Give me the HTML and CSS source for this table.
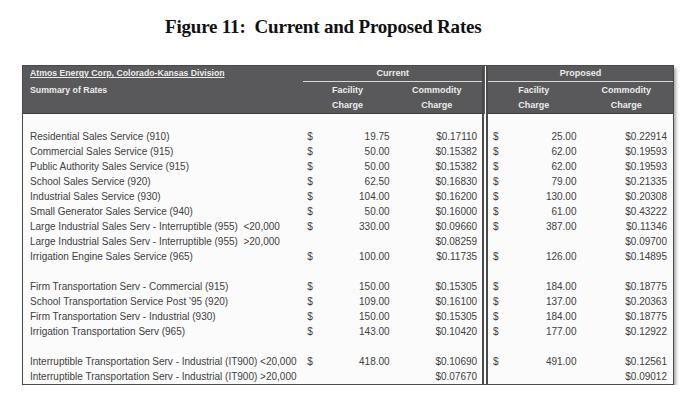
FILE: index.html
```html
<!DOCTYPE html>
<html>
<head>
<meta charset="utf-8">
<link rel="stylesheet" href="styles.css">
</head>
<body>
<h1 class="title">Figure 11:&nbsp; Current and Proposed Rates</h1>
<div class="frame">
<table class="rates">
  <colgroup>
    <col class="c-label"><col class="c-dol"><col class="c-fac"><col class="c-com">
    <col class="c-pdol"><col class="c-pfac"><col class="c-pcom">
  </colgroup>
  <thead>
    <tr class="h1">
      <th class="lbl"><span class="ul">Atmos Energy Corp, Colorado-Kansas Division</span></th>
      <th colspan="3" class="grp cur">Current</th>
      <th colspan="3" class="grp prop div">Proposed</th>
    </tr>
    <tr class="h2">
      <th class="lbl">Summary of Rates</th>
      <th colspan="2">Facility</th>
      <th>Commodity</th>
      <th colspan="2" class="div">Facility</th>
      <th>Commodity</th>
    </tr>
    <tr class="h3">
      <th class="lbl"></th>
      <th colspan="2">Charge</th>
      <th>Charge</th>
      <th colspan="2" class="div">Charge</th>
      <th>Charge</th>
    </tr>
  </thead>
  <tbody>
    <tr class="blank"><td></td><td></td><td></td><td></td><td class="div"></td><td></td><td></td></tr>
    <tr><td class="lbl">Residential Sales Service (910)</td><td class="dol">$</td><td class="num">19.75</td><td class="com">$0.17110</td><td class="dol div">$</td><td class="num">25.00</td><td class="com">$0.22914</td></tr>
    <tr><td class="lbl">Commercial Sales Service (915)</td><td class="dol">$</td><td class="num">50.00</td><td class="com">$0.15382</td><td class="dol div">$</td><td class="num">62.00</td><td class="com">$0.19593</td></tr>
    <tr><td class="lbl">Public Authority Sales Service (915)</td><td class="dol">$</td><td class="num">50.00</td><td class="com">$0.15382</td><td class="dol div">$</td><td class="num">62.00</td><td class="com">$0.19593</td></tr>
    <tr><td class="lbl">School Sales Service (920)</td><td class="dol">$</td><td class="num">62.50</td><td class="com">$0.16830</td><td class="dol div">$</td><td class="num">79.00</td><td class="com">$0.21335</td></tr>
    <tr><td class="lbl">Industrial Sales Service (930)</td><td class="dol">$</td><td class="num">104.00</td><td class="com">$0.16200</td><td class="dol div">$</td><td class="num">130.00</td><td class="com">$0.20308</td></tr>
    <tr><td class="lbl">Small Generator Sales Service (940)</td><td class="dol">$</td><td class="num">50.00</td><td class="com">$0.16000</td><td class="dol div">$</td><td class="num">61.00</td><td class="com">$0.43222</td></tr>
    <tr><td class="lbl">Large Industrial Sales Serv - Interruptible (955)&nbsp; &lt;20,000</td><td class="dol">$</td><td class="num">330.00</td><td class="com">$0.09660</td><td class="dol div">$</td><td class="num">387.00</td><td class="com">$0.11346</td></tr>
    <tr><td class="lbl">Large Industrial Sales Serv - Interruptible (955)&nbsp; &gt;20,000</td><td class="dol"></td><td class="num"></td><td class="com">$0.08259</td><td class="dol div"></td><td class="num"></td><td class="com">$0.09700</td></tr>
    <tr><td class="lbl">Irrigation Engine Sales Service (965)</td><td class="dol">$</td><td class="num">100.00</td><td class="com">$0.11735</td><td class="dol div">$</td><td class="num">126.00</td><td class="com">$0.14895</td></tr>
    <tr class="blank"><td></td><td></td><td></td><td></td><td class="div"></td><td></td><td></td></tr>
    <tr><td class="lbl">Firm Transportation Serv - Commercial (915)</td><td class="dol">$</td><td class="num">150.00</td><td class="com">$0.15305</td><td class="dol div">$</td><td class="num">184.00</td><td class="com">$0.18775</td></tr>
    <tr><td class="lbl">School Transportation Service Post '95 (920)</td><td class="dol">$</td><td class="num">109.00</td><td class="com">$0.16100</td><td class="dol div">$</td><td class="num">137.00</td><td class="com">$0.20363</td></tr>
    <tr><td class="lbl">Firm Transportation Serv - Industrial (930)</td><td class="dol">$</td><td class="num">150.00</td><td class="com">$0.15305</td><td class="dol div">$</td><td class="num">184.00</td><td class="com">$0.18775</td></tr>
    <tr><td class="lbl">Irrigation Transportation Serv (965)</td><td class="dol">$</td><td class="num">143.00</td><td class="com">$0.10420</td><td class="dol div">$</td><td class="num">177.00</td><td class="com">$0.12922</td></tr>
    <tr class="blank"><td></td><td></td><td></td><td></td><td class="div"></td><td></td><td></td></tr>
    <tr><td class="lbl">Interruptible Transportation Serv - Industrial (IT900) &lt;20,000</td><td class="dol">$</td><td class="num">418.00</td><td class="com">$0.10690</td><td class="dol div">$</td><td class="num">491.00</td><td class="com">$0.12561</td></tr>
    <tr><td class="lbl">Interruptible Transportation Serv - Industrial (IT900) &gt;20,000</td><td class="dol"></td><td class="num"></td><td class="com">$0.07670</td><td class="dol div"></td><td class="num"></td><td class="com">$0.09012</td></tr>
  </tbody>
</table>
</div>
</body>
</html>
```
FILE: styles.css
```css
html, body {
  margin: 0;
  padding: 0;
  background: #ffffff;
}
.title {
  margin: 0;
  padding: 17px 0 0 165px;
  height: 48px;
  box-sizing: border-box;
  font-family: "Liberation Serif", "Times New Roman", serif;
  font-weight: bold;
  font-size: 19px;
  line-height: 20px;
  color: #111;
  letter-spacing: -0.2px;
}
.frame {
  margin: 17px 0 0 22px;
  width: 650px;
  border: 1.5px solid #4a4a4a;
  box-shadow: 2px 3px 3px rgba(0,0,0,0.35);
  background: #fbfbfb;
}
.rates {
  width: 100%;
  border-collapse: collapse;
  table-layout: fixed;
  font-family: "Liberation Sans", Arial, sans-serif;
  font-size: 10px;
  color: #404040;
}
.c-label { width: 279px; }
.c-dol { width: 16px; }
.c-fac { width: 72px; }
.c-com { width: 93px; }
.c-pdol { width: 22px; }
.c-pfac { width: 72px; }
.c-pcom { width: 93px; }
.rates th, .rates td {
  padding: 0;
  white-space: nowrap;
  overflow: visible;
}
.rates thead th {
  background: #59595b;
  color: #ececec;
  font-weight: bold;
  font-size: 9px;
  text-align: center;
  height: 16px;
  line-height: 16px;
}
.rates thead th.lbl {
  text-align: left;
  padding-left: 7px;
  font-size: 8.8px;
}
.ul {
  font-size: 8.7px;
  text-decoration: underline;
  text-underline-offset: 1px;
}
.rates thead th.grp {
  border-bottom: 1px solid #d8d8d8;
}
.rates thead tr.h1 th { height: 15px; line-height: 15px; }
.rates thead tr.h3 th {
  height: 14px;
  line-height: 14px;
  padding-bottom: 1px;
  border-bottom: 1.5px solid #3e3e3e;
}
.rates .div {
  border-left: 6px double #4a4a4a;
  background-clip: padding-box;
}
.rates tbody td {
  height: 15px;
  line-height: 15px;
  background: #fbfbfb;
}
.rates td.lbl { padding-left: 7px; }
.rates td.dol { padding-left: 4px; }
.rates td.dol.div { padding-left: 5px; }
.rates td.num { text-align: right; padding-right: 2px; }
.rates td.com { text-align: right; padding-right: 5px; }
.rates tr td:last-child { padding-right: 6px; }
.rates tr td:nth-child(6) { padding-right: 3px; }
```
